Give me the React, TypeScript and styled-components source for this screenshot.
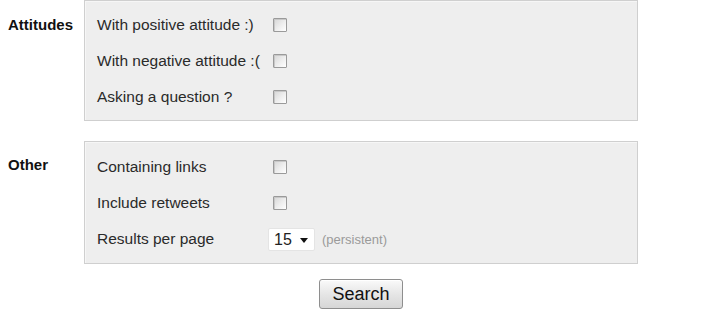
import styled, { createGlobalStyle } from "styled-components";

const GlobalStyle = createGlobalStyle`
  body {
    margin: 0;
    background: #ffffff;
    font-family: "Liberation Sans", Arial, sans-serif;
    color: #222;
  }
`;

const Page = styled.div`
  width: 709px;
  padding: 0 0 0 8px;
  box-sizing: border-box;
`;

const Form = styled.div`
  display: flex;
  flex-direction: column;
  gap: 20px;
  width: 630px;
`;

const Section = styled.div`
  display: grid;
  grid-template-columns: 76px 554px;
  align-items: start;
`;

const SectionTitle = styled.div<{ $top: number }>`
  font-weight: bold;
  font-size: 15px;
  line-height: 18px;
  padding-top: ${({ $top }) => $top}px;
  color: #111;
`;

const Panel = styled.div<{ $pt: number; $pb: number }>`
  background: #eeeeee;
  border: 1px solid #cfcfcf;
  box-shadow: inset 1px 1px 0 #f6f6f6;
  padding: ${({ $pt, $pb }) => `${$pt}px 12px ${$pb}px 12px`};
  display: flex;
  flex-direction: column;
`;

const Row = styled.div`
  display: grid;
  grid-template-columns: 171px auto;
  align-items: center;
  height: 36px;
`;

const Label = styled.span`
  font-size: 15.5px;
  color: #2a2a2a;
`;

const Check = styled.input.attrs({ type: "checkbox" })`
  appearance: none;
  margin: 0 0 0 5px;
  width: 14px;
  height: 14px;
  border: 1px solid #9a9a9a;
  border-radius: 1px;
  background: linear-gradient(135deg, #d6d6d6 0%, #f0f0f0 60%, #ffffff 100%);
  box-shadow: inset 1px 1px 0 #c8c8c8;
  box-sizing: border-box;
`;

const SelectLine = styled.div`
  display: flex;
  align-items: center;
  gap: 7px;
`;

const SelectBox = styled.div`
  position: relative;
  width: 47px;
  height: 23px;
`;

const Select = styled.select`
  appearance: none;
  width: 100%;
  height: 100%;
  border: 1px solid #e4e4e4;
  border-radius: 2px;
  background: #ffffff;
  font-family: "Liberation Sans", Arial, sans-serif;
  font-size: 16px;
  color: #222;
  padding: 0 0 0 5px;
  outline: none;
`;

const Arrow = styled.span`
  position: absolute;
  right: 7px;
  top: 10px;
  width: 0;
  height: 0;
  border-left: 4px solid transparent;
  border-right: 4px solid transparent;
  border-top: 5px solid #111;
  pointer-events: none;
`;

const Hint = styled.span`
  font-size: 13px;
  color: #9a9a9a;
`;

const Actions = styled.div`
  display: flex;
  justify-content: center;
  padding-left: 76px;
  margin-top: -5px;
`;

const SearchButton = styled.button`
  width: 84px;
  height: 30px;
  font-family: "Liberation Sans", Arial, sans-serif;
  font-size: 18px;
  color: #111;
  border: 1px solid #8e8e8e;
  border-radius: 3px;
  background: linear-gradient(#fafafa, #e6e6e6 50%, #d6d6d6);
  box-shadow: inset 0 1px 0 #ffffff;
  padding: 0;
`;

const attitudes = ["With positive attitude :)", "With negative attitude :(", "Asking a question ?"];
const others = ["Containing links", "Include retweets"];

export default function App() {
  return (
    <Page>
      <GlobalStyle />
      <Form>
        <Section>
          <SectionTitle $top={16}>Attitudes</SectionTitle>
          <Panel $pt={6} $pb={5}>
            {attitudes.map((a) => (
              <Row key={a}>
                <Label>{a}</Label>
                <Check />
              </Row>
            ))}
          </Panel>
        </Section>
        <Section>
          <SectionTitle $top={15}>Other</SectionTitle>
          <Panel $pt={7} $pb={6}>
            {others.map((a) => (
              <Row key={a}>
                <Label>{a}</Label>
                <Check />
              </Row>
            ))}
            <Row>
              <Label>Results per page</Label>
              <SelectLine>
                <SelectBox>
                  <Select defaultValue="15">
                    <option>10</option>
                    <option>15</option>
                    <option>25</option>
                    <option>50</option>
                  </Select>
                  <Arrow />
                </SelectBox>
                <Hint>(persistent)</Hint>
              </SelectLine>
            </Row>
          </Panel>
        </Section>
        <Actions>
          <SearchButton>Search</SearchButton>
        </Actions>
      </Form>
    </Page>
  );
}
